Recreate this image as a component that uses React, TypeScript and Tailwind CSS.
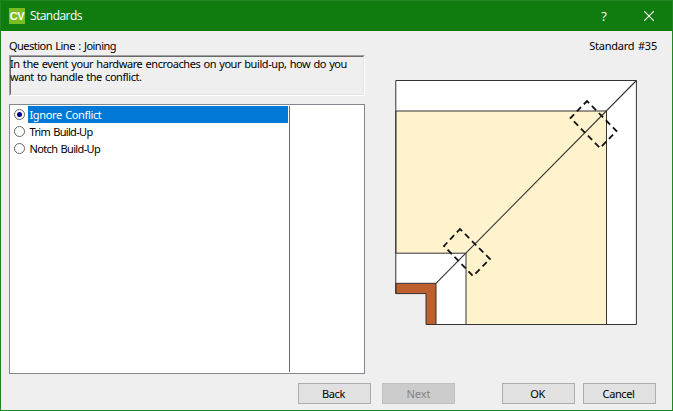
import { useState } from "react";

const options = [
  { label: "Ignore Conflict", tracking: "tracking-[-0.37px]" },
  { label: "Trim Build-Up", tracking: "tracking-[-0.68px]" },
  { label: "Notch Build-Up", tracking: "tracking-[-0.65px]" },
];

function TitleBar() {
  return (
    <header className="flex h-[30px] shrink-0 items-center bg-[#107c10] pl-2 text-white">
      <div className="flex size-4 items-center justify-center bg-[#78be20]">
        <span className="font-['Liberation_Sans'] text-[11px] leading-none font-bold tracking-[-0.4px]">CV</span>
      </div>
      <h1 className="ml-[5px] grow font-['Open_Sans'] text-[12px] leading-4 tracking-[-0.56px]">Standards</h1>
      <button className="flex h-full w-[45px] items-center justify-center pr-[1px] font-['Open_Sans'] text-[13px]">?</button>
      <button aria-label="Close" className="flex h-full w-[45px] items-center justify-center pr-[2px]">
        <svg width="10" height="10" viewBox="0 0 10 10" stroke="white" strokeWidth="1.1">
          <path d="M0 0 10 10M10 0 0 10" />
        </svg>
      </button>
    </header>
  );
}

function Diagram() {
  return (
    <svg width="244" height="248" viewBox="394 78 244 248" fill="none" stroke="#333" strokeWidth="1">
      <path d="M395.8 80.5H636.4V324.5H426V293.6H395.8Z" fill="white" stroke="none" />
      <path d="M395.8 111H606.5V324.5H466V253.2H395.8Z" fill="#fef3cc" />
      <path d="M395.8 283.3H436V324.5H426V293.6H395.8Z" fill="#bd602d" />
      <path d="M395.8 293.6V80.5H636.4V324.5H426" />
      <path d="M436 283.3 636.4 80.5" strokeWidth="1.1" />
      <g stroke="#111" strokeWidth="1.8" strokeDasharray="6 4" strokeDashoffset="3">
        <path d="M587 101 616.5 131 600 148 570.5 118Z" />
        <path d="M460 229 490 259 473 276 444 246Z" />
      </g>
    </svg>
  );
}

export default function App() {
  const [selected, setSelected] = useState(0);
  const button = "h-[21px] w-[73px] border border-[#adadad] bg-[#e1e1e1] pr-[2px] leading-[19px] tracking-[-0.4px]";
  return (
    <div className="flex h-[411px] w-[673px] flex-col overflow-hidden border border-[#218621] bg-[#efefef] font-['Noto_Sans',sans-serif] text-[11px] leading-[13px] whitespace-nowrap text-black">
      <TitleBar />
      <div className="flex grow pl-2">
        <section className="w-[356px]">
          <p className="mt-2 h-4 [word-spacing:1px] tracking-[-0.52px]">Question Line : Joining</p>
          <div className="h-[41px] border border-t-[#a0a0a0] border-r-white border-b-white border-l-[#a0a0a0]">
            <div className="h-full border border-t-[#696969] border-r-[#e3e3e3] border-b-[#e3e3e3] border-l-[#696969]">
              <p className="-ml-px [word-spacing:0.7px] tracking-[-0.42px]">In the event your hardware encroaches on your build-up, how do you</p>
              <p className="-ml-px [word-spacing:0.7px] tracking-[-0.42px]">want to handle the conflict.</p>
            </div>
          </div>
          <div className="mt-2 flex h-[270px] border border-[#828790] bg-white p-px">
            <ul className="w-[278px] pr-px">
              {options.map((option, i) => (
                <li key={option.label} onClick={() => setSelected(i)} className="flex h-[17px] items-center">
                  <span className="mr-[3px] ml-[3px] flex size-[11px] shrink-0 items-center justify-center rounded-full border border-[#666]">
                    {selected === i && <span className="size-[5px] rounded-full bg-[#000080]" />}
                  </span>
                  <span className={`grow pl-[1.5px] leading-[17px] [word-spacing:1px] ${option.tracking} ${selected === i ? "bg-[#0078d7] text-white" : ""}`}>
                    {option.label}
                  </span>
                </li>
              ))}
            </ul>
            <div className="w-px bg-[#696969]" />
          </div>
        </section>
        <section className="flex grow flex-col pl-[29px]">
          <p className="mt-2 mr-[15px] h-[39px] text-right [word-spacing:1px] tracking-[-0.23px]">Standard #35</p>
          <Diagram />
        </section>
      </div>
      <footer className="flex h-[27px] shrink-0 pl-[297px]">
        <button className={button}>Back</button>
        <button disabled className="ml-[11px] h-[21px] w-[73px] border border-[#bfbfbf] bg-[#cccccc] leading-[19px] text-[#838383]">Next</button>
        <button className={`ml-[47px] ${button}`}>OK</button>
        <button className={`ml-2 ${button}`}>Cancel</button>
      </footer>
    </div>
  );
}
